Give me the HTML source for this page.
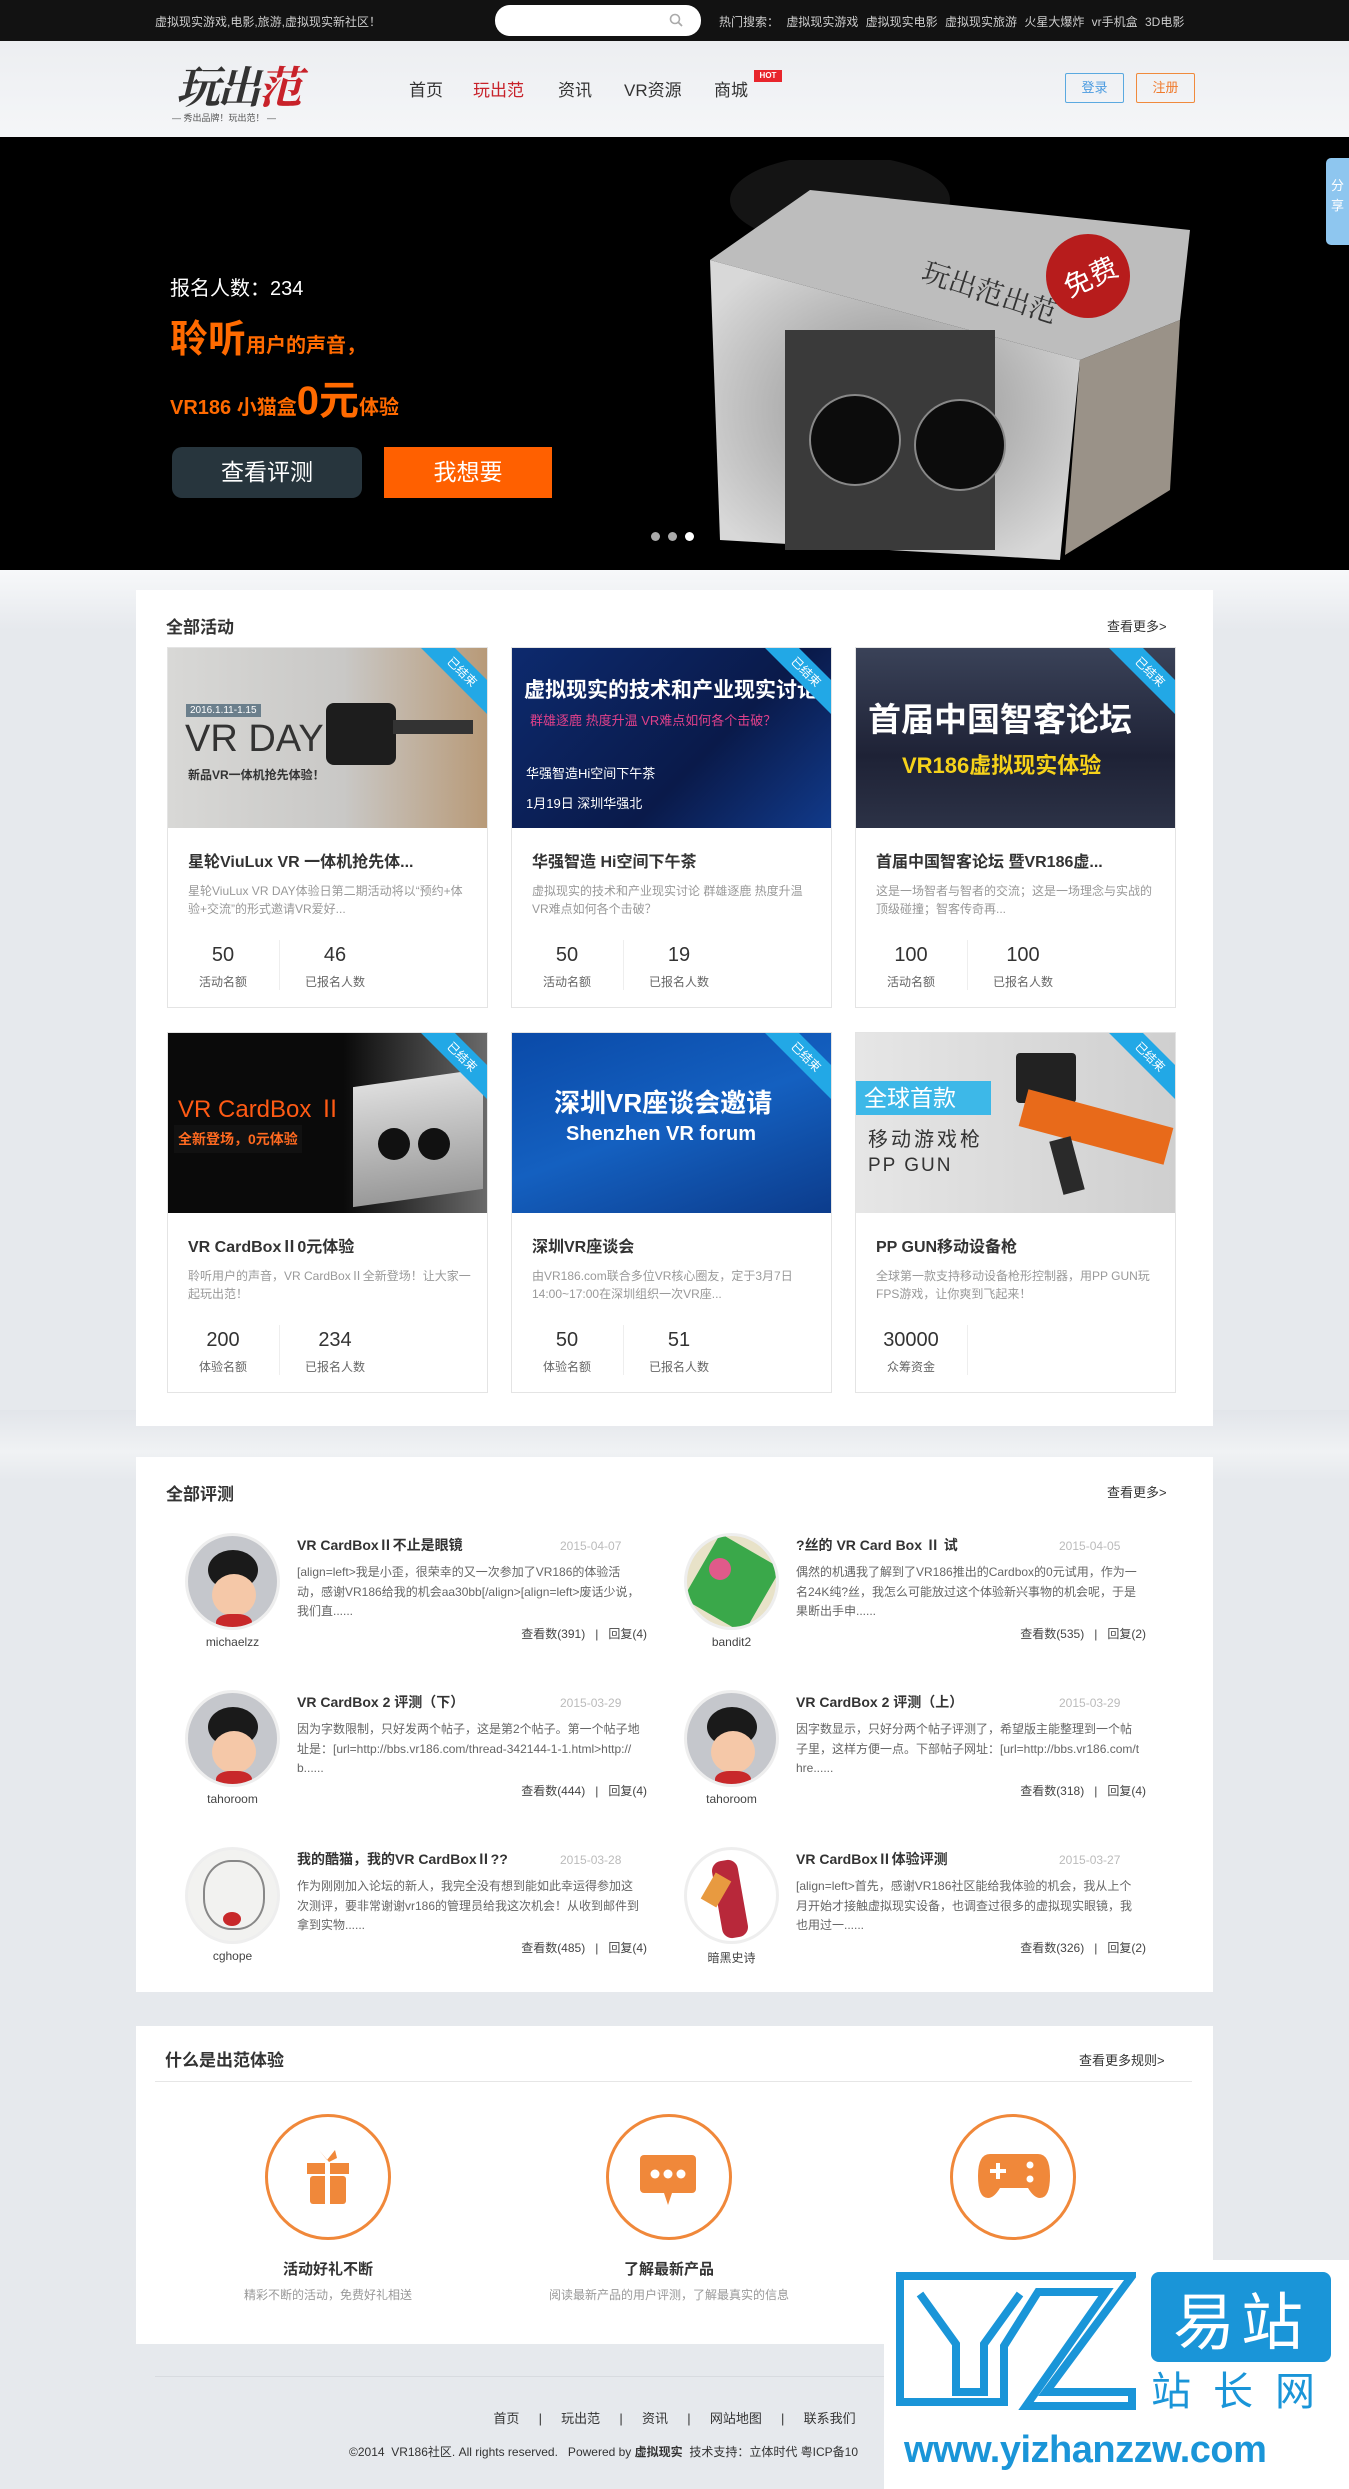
<!DOCTYPE html>
<html><head><meta charset="utf-8">
<style>
*{margin:0;padding:0;box-sizing:border-box}
body{width:1349px;height:2489px;position:relative;overflow:hidden;background:#e6e9ed;font-family:"Liberation Sans","Noto Sans CJK SC",sans-serif;color:#333}
.a{position:absolute}
.top{left:0;top:0;width:1349px;height:41px;background:#121212}
.hdr{left:0;top:41px;width:1349px;height:96px;background:linear-gradient(#eceef1,#f5f6f8)}
.banner{left:0;top:137px;width:1349px;height:433px;background:#000}
.panel{background:#fff;left:136px;width:1077px}
.card{width:321px;height:361px;border:1px solid #e4e4e4;background:#fff;overflow:hidden}
.card .img{position:absolute;left:0;top:0;width:319px;height:180px;overflow:hidden}
.rib{position:absolute;right:-40px;top:12px;width:130px;height:24px;background:#22a8e6;color:#fff;font-size:12px;text-align:center;line-height:24px;transform:rotate(45deg)}
.card h3{position:absolute;left:20px;top:200px;font-size:16px;font-weight:bold;color:#333;white-space:nowrap}
.card p{position:absolute;left:20px;top:234px;width:285px;font-size:12px;line-height:18px;color:#999}
.n{position:absolute;top:296px;width:110px;text-align:center;font-size:20px;color:#333}
.l{position:absolute;top:325px;width:110px;text-align:center;font-size:12px;color:#666}
.dv{position:absolute;left:111px;top:292px;width:1px;height:50px;background:#eee}
.rv .av{position:absolute;left:0;top:0;width:95px;height:97px;border-radius:50%;border:3px solid #eee;overflow:hidden;background:#c5c7cc}
.rv .un{position:absolute;left:-10px;top:102px;width:115px;text-align:center;font-size:12px;color:#444}
.rv h4{position:absolute;left:112px;top:2px;font-size:14px;font-weight:bold;white-space:nowrap}
.rv .dt{position:absolute;left:375px;top:6px;font-size:12px;color:#bbb;white-space:nowrap}
.rv .ds{position:absolute;left:112px;top:30px;width:345px;font-size:12px;line-height:19.5px;color:#666;word-break:break-all}
.rv .ct{position:absolute;left:300px;top:92px;width:162px;text-align:right;font-size:12px;color:#444;white-space:nowrap}
.circ{width:126px;height:126px;border-radius:50%;border:3px solid #f0883a}
</style></head><body>

<div class="a top"></div>
<div class="a" style="left:155px;top:13px;font-size:12px;color:#ccc">虚拟现实游戏,电影,旅游,虚拟现实新社区！</div>
<div class="a" style="left:495px;top:5px;width:206px;height:31px;border-radius:15px;background:#fff"></div>
<svg class="a" style="left:668px;top:12px" width="16" height="16" viewBox="0 0 16 16"><circle cx="7" cy="7" r="4.5" fill="none" stroke="#aaa" stroke-width="1.6"/><path d="M10.5 10.5 L14 14" stroke="#aaa" stroke-width="1.8"/></svg>
<div class="a" style="left:719px;top:13px;font-size:12px;color:#ccc;word-spacing:4px;white-space:nowrap">热门搜索： 虚拟现实游戏 虚拟现实电影 虚拟现实旅游 火星大爆炸 vr手机盒 3D电影</div>

<div class="a hdr"></div>
<div class="a" style="left:176px;top:52px;font-family:'Noto Serif CJK SC',serif;font-size:44px;font-weight:bold;color:#333;letter-spacing:-3px;font-style:italic">玩出<span style="color:#c8222a">范</span></div>
<div class="a" style="left:172px;top:111px;font-size:9px;color:#555;white-space:nowrap">— 秀出品牌！玩出范！ —</div>
<div class="a" style="left:409px;top:76px;font-size:17px;color:#333;white-space:nowrap">首页</div>
<div class="a" style="left:473px;top:76px;font-size:17px;color:#c8222a">玩出范</div>
<div class="a" style="left:558px;top:76px;font-size:17px;color:#333">资讯</div>
<div class="a" style="left:624px;top:76px;font-size:17px;color:#333">VR资源</div>
<div class="a" style="left:714px;top:76px;font-size:17px;color:#333">商城</div>
<div class="a" style="left:754px;top:70px;width:28px;height:12px;background:#e8262c;color:#fff;font-size:8px;font-weight:bold;text-align:center;line-height:12px">HOT</div>
<div class="a" style="left:1065px;top:73px;width:59px;height:30px;border:1px solid #5aa9e0;color:#4a9be0;font-size:13px;text-align:center;line-height:28px;border-radius:2px">登录</div>
<div class="a" style="left:1136px;top:73px;width:59px;height:30px;border:1px solid #f08a3c;color:#f07a2c;font-size:13px;text-align:center;line-height:28px;border-radius:2px">注册</div>

<div class="a banner"></div>
<svg class="a" style="left:690px;top:160px" width="510" height="400" viewBox="0 0 510 400">
<defs><radialGradient id="g1" cx="50%" cy="50%" r="60%"><stop offset="0" stop-color="#8a8a8a"/><stop offset="1" stop-color="#d8d8d8"/></radialGradient></defs>
<ellipse cx="150" cy="40" rx="110" ry="45" fill="#141414"/>
<polygon points="20,100 120,30 500,70 490,160 390,200" fill="#bdbdbd"/>
<polygon points="20,100 390,200 370,400 30,380" fill="url(#g1)"/>
<polygon points="390,200 490,160 480,330 375,395" fill="#9a9288"/>
<text x="230" y="120" font-size="28" fill="#333" font-family="Noto Serif CJK SC" transform="rotate(18 230 120)">玩出范出范</text>
<rect x="95" y="170" width="210" height="220" fill="#3a3a3a"/>
<circle cx="165" cy="280" r="45" fill="#0c0c0c" stroke="#888" stroke-width="2"/>
<circle cx="270" cy="285" r="45" fill="#0c0c0c" stroke="#888" stroke-width="2"/>
<circle cx="398" cy="116" r="42" fill="#b71c1c"/>
<text x="372" y="128" font-size="28" fill="#fff" font-family="Noto Sans CJK SC" transform="rotate(-25 398 116)">免费</text>
</svg>
<div class="a" style="left:170px;top:272px;font-size:20px;color:#fff">报名人数：234</div>
<div class="a" style="left:170px;top:308px;font-size:20px;color:#ff6a00;font-weight:bold;white-space:nowrap"><span style="font-size:38px">聆听</span>用户的声音，</div>
<div class="a" style="left:170px;top:368px;font-size:20px;color:#ff6a00;font-weight:bold;white-space:nowrap">VR186 小猫盒<span style="font-size:40px">0元</span>体验</div>
<div class="a" style="left:172px;top:447px;width:190px;height:51px;background:#27353d;border-radius:10px;color:#fff;font-size:23px;text-align:center;line-height:51px">查看评测</div>
<div class="a" style="left:384px;top:447px;width:168px;height:51px;background:#ff6000;color:#fff;font-size:23px;text-align:center;line-height:51px">我想要</div>
<div class="a" style="left:651px;top:532px;width:9px;height:9px;border-radius:50%;background:#aaa"></div>
<div class="a" style="left:668px;top:532px;width:9px;height:9px;border-radius:50%;background:#aaa"></div>
<div class="a" style="left:685px;top:532px;width:9px;height:9px;border-radius:50%;background:#fff"></div>
<div class="a" style="left:1326px;top:158px;width:23px;height:87px;background:#8ec6ef;border-radius:5px 0 0 5px;color:#fff;font-size:13px;text-align:center;padding-top:18px;line-height:20px">分<br>享</div>

<div class="a" style="left:0;top:570px;width:1349px;height:60px;background:linear-gradient(#f7f8fa,#e6e9ed)"></div>
<div class="a" style="left:0;top:1410px;width:1349px;height:70px;background:linear-gradient(#e2e5ea,#f0f2f4 60%,#e6e9ed)"></div>

<div class="a panel" style="top:590px;height:836px"></div>
<div class="a" style="left:166px;top:613px;font-size:17px;font-weight:bold">全部活动</div>
<div class="a" style="left:1107px;top:616px;font-size:13px;color:#333">查看更多&gt;</div>

<div class="a card" style="left:167px;top:647px">
 <div class="img" style="background:linear-gradient(90deg,#d8d8d6,#c9c8c6 55%,#b89a78)">
  <div class="a" style="left:18px;top:56px;background:#6b7f8c;color:#fff;font-size:10px;padding:1px 4px">2016.1.11-1.15</div>
  <div class="a" style="left:17px;top:70px;font-size:38px;color:#333">VR DAY</div>
  <div class="a" style="left:20px;top:118px;font-size:12px;font-weight:bold;color:#333">新品VR一体机抢先体验！</div>
  <div class="a" style="left:158px;top:55px;width:70px;height:62px;background:#1d1d1d;border-radius:8px"></div>
  <div class="a" style="left:225px;top:72px;width:80px;height:14px;background:#333"></div>
  <div class="rib">已结束</div>
 </div>
 <h3>星轮ViuLux VR 一体机抢先体...</h3>
 <p>星轮ViuLux VR DAY体验日第二期活动将以“预约+体验+交流”的形式邀请VR爱好...</p>
 <div class="n" style="left:0">50</div><div class="l" style="left:0">活动名额</div><div class="dv"></div>
 <div class="n" style="left:112px">46</div><div class="l" style="left:112px">已报名人数</div>
</div>

<div class="a card" style="left:511px;top:647px">
 <div class="img" style="background:linear-gradient(135deg,#0d2a6e,#0a1a4a 60%,#113a8a)">
  <div class="a" style="left:12px;top:26px;font-size:21px;font-weight:bold;color:#fff;white-space:nowrap">虚拟现实的技术和产业现实讨论</div>
  <div class="a" style="left:18px;top:62px;font-size:13px;color:#e0408a;white-space:nowrap">群雄逐鹿 热度升温 VR难点如何各个击破？</div>
  <div class="a" style="left:14px;top:115px;font-size:13px;color:#fff">华强智造Hi空间下午茶</div>
  <div class="a" style="left:14px;top:145px;font-size:13px;color:#fff">1月19日 深圳华强北</div>
  <div class="rib">已结束</div>
 </div>
 <h3>华强智造 Hi空间下午茶</h3>
 <p>虚拟现实的技术和产业现实讨论 群雄逐鹿 热度升温VR难点如何各个击破？</p>
 <div class="n" style="left:0">50</div><div class="l" style="left:0">活动名额</div><div class="dv"></div>
 <div class="n" style="left:112px">19</div><div class="l" style="left:112px">已报名人数</div>
</div>

<div class="a card" style="left:855px;top:647px">
 <div class="img" style="background:linear-gradient(180deg,#3a4258,#1e2236 60%,#2c3246)">
  <div class="a" style="left:12px;top:45px;font-size:33px;font-weight:bold;color:#fff;white-space:nowrap">首届中国智客论坛</div>
  <div class="a" style="left:46px;top:100px;font-size:22px;font-weight:bold;color:#f6d21a;white-space:nowrap">VR186虚拟现实体验</div>
  <div class="rib">已结束</div>
 </div>
 <h3>首届中国智客论坛 暨VR186虚...</h3>
 <p>这是一场智者与智者的交流；这是一场理念与实战的顶级碰撞；智客传奇再...</p>
 <div class="n" style="left:0">100</div><div class="l" style="left:0">活动名额</div><div class="dv"></div>
 <div class="n" style="left:112px">100</div><div class="l" style="left:112px">已报名人数</div>
</div>

<div class="a card" style="left:167px;top:1032px">
 <div class="img" style="background:linear-gradient(90deg,#0a0a0a 55%,#6a6a6a)">
  <div class="a" style="left:10px;top:56px;font-size:24px;color:#ff5a14;white-space:nowrap">VR CardBox Ⅱ</div>
  <div class="a" style="left:6px;top:92px;font-size:14px;font-weight:bold;color:#ff6a20;background:#111;padding:4px">全新登场，0元体验</div>
  <div class="a" style="left:185px;top:45px;width:130px;height:120px;background:linear-gradient(#ddd,#999);transform:skewY(-8deg)"></div>
  <div class="a" style="left:210px;top:95px;width:32px;height:32px;border-radius:50%;background:#111"></div>
  <div class="a" style="left:250px;top:95px;width:32px;height:32px;border-radius:50%;background:#111"></div>
  <div class="rib">已结束</div>
 </div>
 <h3>VR CardBoxⅡ0元体验</h3>
 <p>聆听用户的声音，VR CardBoxⅡ全新登场！让大家一起玩出范！</p>
 <div class="n" style="left:0">200</div><div class="l" style="left:0">体验名额</div><div class="dv"></div>
 <div class="n" style="left:112px">234</div><div class="l" style="left:112px">已报名人数</div>
</div>

<div class="a card" style="left:511px;top:1032px">
 <div class="img" style="background:linear-gradient(160deg,#0a4aa8,#1460c0 50%,#0c3c8c)">
  <div class="a" style="left:42px;top:50px;font-size:26px;font-weight:bold;color:#fff;white-space:nowrap">深圳VR座谈会邀请</div>
  <div class="a" style="left:54px;top:90px;font-size:20px;font-weight:bold;color:#fff;white-space:nowrap">Shenzhen VR forum</div>
  <div class="rib">已结束</div>
 </div>
 <h3>深圳VR座谈会</h3>
 <p>由VR186.com联合多位VR核心圈友，定于3月7日14:00~17:00在深圳组织一次VR座...</p>
 <div class="n" style="left:0">50</div><div class="l" style="left:0">体验名额</div><div class="dv"></div>
 <div class="n" style="left:112px">51</div><div class="l" style="left:112px">已报名人数</div>
</div>

<div class="a card" style="left:855px;top:1032px">
 <div class="img" style="background:linear-gradient(90deg,#e6e6e6,#cfcfcf)">
  <div class="a" style="left:0;top:48px;width:135px;height:34px;background:#3db8e8;color:#fff;font-size:23px;padding-left:8px;line-height:34px">全球首款</div>
  <div class="a" style="left:12px;top:90px;font-size:20px;color:#333;letter-spacing:3px">移动游戏枪</div>
  <div class="a" style="left:12px;top:122px;font-size:19px;color:#333;letter-spacing:2px">PP GUN</div>
  <div class="a" style="left:160px;top:20px;width:60px;height:50px;background:#222;border-radius:4px"></div>
  <div class="a" style="left:165px;top:75px;width:150px;height:38px;background:#e86a1a;transform:rotate(15deg)"></div>
  <div class="a" style="left:200px;top:105px;width:22px;height:55px;background:#2a2a2a;transform:rotate(-15deg)"></div>
  <div class="rib">已结束</div>
 </div>
 <h3>PP GUN移动设备枪</h3>
 <p>全球第一款支持移动设备枪形控制器，用PP GUN玩FPS游戏，让你爽到飞起来！</p>
 <div class="n" style="left:0">30000</div><div class="l" style="left:0">众筹资金</div><div class="dv"></div>
</div>

<div class="a panel" style="top:1457px;height:535px"></div>
<div class="a" style="left:166px;top:1480px;font-size:17px;font-weight:bold">全部评测</div>
<div class="a" style="left:1107px;top:1482px;font-size:13px;color:#333">查看更多&gt;</div>

<div class="a rv" style="left:185px;top:1533px"><div class="av"><div class="a" style="left:20px;top:14px;width:50px;height:40px;border-radius:50%;background:#1a1a1a"></div><div class="a" style="left:24px;top:38px;width:44px;height:42px;border-radius:50%;background:#f5c8a8"></div><div class="a" style="left:28px;top:78px;width:36px;height:20px;background:#c8282a;border-radius:40% 40% 0 0"></div></div><div class="un">michaelzz</div>
<h4>VR CardBoxⅡ不止是眼镜</h4><div class="dt">2015-04-07</div><div class="ds">[align=left&gt;我是小歪，很荣幸的又一次参加了VR186的体验活动，感谢VR186给我的机会aa30bb[/align&gt;[align=left&gt;废话少说，我们直......</div><div class="ct">查看数(391) &nbsp; | &nbsp; 回复(4)</div></div>

<div class="a rv" style="left:684px;top:1533px"><div class="av" style="background:#e8e2c8"><div class="a" style="left:10px;top:10px;width:70px;height:75px;background:#3aa84a;transform:rotate(30deg)"></div><div class="a" style="left:22px;top:22px;width:22px;height:22px;background:#e05a8a;border-radius:50%"></div></div><div class="un">bandit2</div>
<h4>?丝的 VR Card Box Ⅱ 试</h4><div class="dt">2015-04-05</div><div class="ds">偶然的机遇我了解到了VR186推出的Cardbox的0元试用，作为一名24K纯?丝，我怎么可能放过这个体验新兴事物的机会呢，于是果断出手申......</div><div class="ct">查看数(535) &nbsp; | &nbsp; 回复(2)</div></div>

<div class="a rv" style="left:185px;top:1690px"><div class="av"><div class="a" style="left:20px;top:14px;width:50px;height:40px;border-radius:50%;background:#1a1a1a"></div><div class="a" style="left:24px;top:38px;width:44px;height:42px;border-radius:50%;background:#f5c8a8"></div><div class="a" style="left:28px;top:78px;width:36px;height:20px;background:#c8282a;border-radius:40% 40% 0 0"></div></div><div class="un">tahoroom</div>
<h4>VR CardBox 2 评测（下）</h4><div class="dt">2015-03-29</div><div class="ds">因为字数限制，只好发两个帖子，这是第2个帖子。第一个帖子地址是：[url=http://bbs.vr186.com/thread-342144-1-1.html&gt;http://b......</div><div class="ct">查看数(444) &nbsp; | &nbsp; 回复(4)</div></div>

<div class="a rv" style="left:684px;top:1690px"><div class="av"><div class="a" style="left:20px;top:14px;width:50px;height:40px;border-radius:50%;background:#1a1a1a"></div><div class="a" style="left:24px;top:38px;width:44px;height:42px;border-radius:50%;background:#f5c8a8"></div><div class="a" style="left:28px;top:78px;width:36px;height:20px;background:#c8282a;border-radius:40% 40% 0 0"></div></div><div class="un">tahoroom</div>
<h4>VR CardBox 2 评测（上）</h4><div class="dt">2015-03-29</div><div class="ds">因字数显示，只好分两个帖子评测了，希望版主能整理到一个帖子里，这样方便一点。下部帖子网址：[url=http://bbs.vr186.com/thre......</div><div class="ct">查看数(318) &nbsp; | &nbsp; 回复(4)</div></div>

<div class="a rv" style="left:185px;top:1847px"><div class="av" style="background:#f2f2f0"><div class="a" style="left:15px;top:10px;width:62px;height:70px;border-radius:45%;border:2px solid #888"></div><div class="a" style="left:35px;top:62px;width:18px;height:14px;background:#c8282a;border-radius:50%"></div></div><div class="un">cghope</div>
<h4>我的酷猫，我的VR CardBoxⅡ??</h4><div class="dt">2015-03-28</div><div class="ds">作为刚刚加入论坛的新人，我完全没有想到能如此幸运得参加这次测评，要非常谢谢vr186的管理员给我这次机会！从收到邮件到拿到实物......</div><div class="ct">查看数(485) &nbsp; | &nbsp; 回复(4)</div></div>

<div class="a rv" style="left:684px;top:1847px"><div class="av" style="background:#fff"><div class="a" style="left:30px;top:10px;width:26px;height:78px;background:#b8283a;border-radius:10px;transform:rotate(-10deg)"></div><div class="a" style="left:20px;top:25px;width:18px;height:30px;background:#e89a40;transform:rotate(30deg)"></div></div><div class="un">暗黑史诗</div>
<h4>VR CardBoxⅡ体验评测</h4><div class="dt">2015-03-27</div><div class="ds">[align=left&gt;首先，感谢VR186社区能给我体验的机会，我从上个月开始才接触虚拟现实设备，也调查过很多的虚拟现实眼镜，我也用过一......</div><div class="ct">查看数(326) &nbsp; | &nbsp; 回复(2)</div></div>

<div class="a panel" style="top:2026px;height:318px"></div>
<div class="a" style="left:165px;top:2046px;font-size:17px;font-weight:bold">什么是出范体验</div>
<div class="a" style="left:1079px;top:2050px;font-size:13px;color:#333">查看更多规则&gt;</div>
<div class="a" style="left:155px;top:2081px;width:1037px;height:1px;background:#e6e6e6"></div>

<div class="a circ" style="left:265px;top:2114px"></div>
<svg class="a" style="left:305px;top:2148px" width="46" height="58" viewBox="0 0 46 58"><path d="M14 2 L22 12 L30 2 L32 10 L24 14 Z" fill="#f0883a"/><rect x="2" y="15" width="42" height="11" fill="#f0883a"/><rect x="5" y="28" width="36" height="28" rx="3" fill="#f0883a"/><rect x="20" y="15" width="5" height="42" fill="#fff"/></svg>
<div class="a" style="left:228px;top:2258px;width:200px;text-align:center;font-size:15px;font-weight:bold">活动好礼不断</div>
<div class="a" style="left:198px;top:2286px;width:260px;text-align:center;font-size:12px;color:#999">精彩不断的活动，免费好礼相送</div>

<div class="a circ" style="left:606px;top:2114px"></div>
<svg class="a" style="left:638px;top:2153px" width="60" height="60" viewBox="0 0 60 60"><rect x="2" y="2" width="56" height="38" rx="4" fill="#f0883a"/><path d="M30 40 L26 40 L30 52 L34 40 Z" fill="#f0883a"/><circle cx="17" cy="21" r="4.5" fill="#fff"/><circle cx="30" cy="21" r="4.5" fill="#fff"/><circle cx="43" cy="21" r="4.5" fill="#fff"/></svg>
<div class="a" style="left:569px;top:2258px;width:200px;text-align:center;font-size:15px;font-weight:bold">了解最新产品</div>
<div class="a" style="left:539px;top:2286px;width:260px;text-align:center;font-size:12px;color:#999">阅读最新产品的用户评测，了解最真实的信息</div>

<div class="a circ" style="left:950px;top:2114px"></div>
<svg class="a" style="left:976px;top:2152px" width="76" height="48" viewBox="0 0 76 48"><path d="M14 2 H62 Q74 2 74 24 Q74 46 64 46 Q58 46 52 36 H24 Q18 46 12 46 Q2 46 2 24 Q2 2 14 2 Z" fill="#f0883a"/><rect x="14" y="17" width="16" height="4" fill="#fff"/><rect x="20" y="11" width="4" height="16" fill="#fff"/><circle cx="54" cy="13" r="3.5" fill="#fff"/><circle cx="54" cy="27" r="3.5" fill="#fff"/></svg>
<div class="a" style="left:913px;top:2258px;width:200px;text-align:center;font-size:15px;font-weight:bold;color:#ddd">新品优先体验</div>

<div class="a" style="left:155px;top:2376px;width:1037px;height:1px;background:#d8dbe0"></div>
<div class="a" style="left:0;top:2408px;width:1349px;text-align:center;font-size:13px;color:#333;word-spacing:6px">首页 &nbsp;| &nbsp;玩出范 &nbsp;| &nbsp;资讯 &nbsp;| &nbsp;网站地图 &nbsp;| &nbsp;联系我们</div>
<div class="a" style="left:349px;top:2443px;font-size:12px;color:#333;white-space:nowrap">©2014 &nbsp;VR186社区. All rights reserved. &nbsp; Powered by <b>虚拟现实</b> &nbsp;技术支持：立体时代 粤ICP备10</div>

<div class="a" style="left:884px;top:2260px;width:465px;height:229px;background:#fff"></div>
<svg class="a" style="left:896px;top:2272px" width="240" height="138" viewBox="0 0 240 138"><path d="M4 4 H236 L150 120 H236 V134 H130 L210 20 H142 L108 74 V130 H4 Z" fill="none" stroke="#1a95d8" stroke-width="8"/><path d="M24 22 L60 72 V120 H88 V72 L124 22" fill="none" stroke="#1a95d8" stroke-width="8"/></svg>
<div class="a" style="left:1151px;top:2272px;width:180px;height:90px;background:#1a95d8;border-radius:8px;color:#fff;font-size:62px;line-height:90px;text-align:center;letter-spacing:6px;font-family:'Noto Sans CJK SC',sans-serif;white-space:nowrap">易站</div>
<div class="a" style="left:1151px;top:2364px;width:190px;color:#1a95d8;font-size:40px;line-height:48px;letter-spacing:22px;font-family:'Noto Sans CJK SC',sans-serif;white-space:nowrap">站长网</div>
<div class="a" style="left:904px;top:2428px;color:#1a95d8;font-size:38px;font-weight:bold;line-height:44px;white-space:nowrap;letter-spacing:-0.5px">www.yizhanzzw.com</div>
</body></html>
